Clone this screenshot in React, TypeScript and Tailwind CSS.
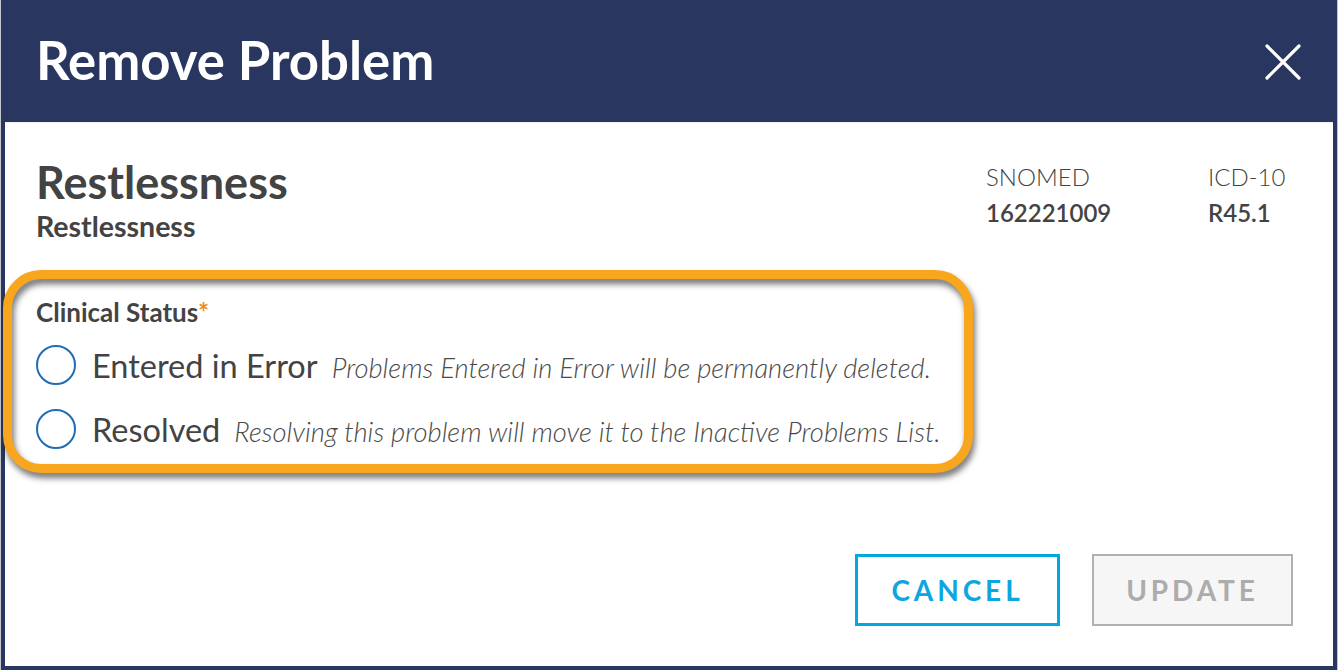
const RadioOption = ({ label, note }: { label: string; note: string }) => {
  return (
    <div className="flex items-center h-[64px]">
      <span className="w-[40px] h-[40px] rounded-full border-2 border-[#1f6db6] bg-white shrink-0" />
      <div className="flex items-baseline ml-[16px]">
        <span className="text-[32.5px] leading-[1.2] text-[#434343]">{label}</span>
        <span className="ml-[14px] text-[27.4px] leading-[1.2] italic font-light text-[#4a4a4a]">{note}</span>
      </div>
    </div>
  );
};

const CloseIcon = () => (
  <svg width="36" height="36" viewBox="0 0 36 36" fill="none">
    <path d="M2 2L34 34M34 2L2 34" stroke="white" strokeWidth="3.2" strokeLinecap="round" />
  </svg>
);

export default function App() {
  return (
    <div
      className="w-[1338px] h-[670px] bg-[#c4c7ce] flex overflow-hidden"
      style={{ fontFamily: "Lato, 'Open Sans', sans-serif" }}
    >
      <div className="ml-px w-[1336px] h-[670px] bg-[#29365f] flex flex-col">
        {/* header */}
        <div className="h-[122px] flex items-center justify-between pl-[35px] pr-[36px] shrink-0">
          <h1 className="text-[52.7px] leading-[1.2] font-bold text-white pb-[2px]">Remove Problem</h1>
          <button className="mt-[2px]">
            <CloseIcon />
          </button>
        </div>

        {/* body */}
        <div className="relative flex-1 mx-[4px] mb-[4px] bg-white border-t border-[#eef0f3] flex flex-col pl-[31px] pr-[25px]">
          <div className="flex justify-between items-start pt-[32px]">
            <div className="flex flex-col">
              <span className="text-[45px] leading-[1.2] font-bold text-[#434343]">Restlessness</span>
              <span className="text-[28.5px] leading-[1.2] font-bold text-[#434343]">Restlessness</span>
            </div>
            <div className="flex mt-[4px] text-[24px] leading-[36px] text-[#434343]">
              <div className="w-[222px] flex flex-col">
                <span className="font-light">SNOMED</span>
                <span className="font-semibold">162221009</span>
              </div>
              <div className="w-[100px] flex flex-col">
                <span className="font-light">ICD-10</span>
                <span className="font-semibold">R45.1</span>
              </div>
            </div>
          </div>

          <div className="mt-[54px] flex flex-col">
            <span className="text-[26px] leading-[1.2] font-bold text-[#434343]">
              Clinical Status<span className="text-[#f08b1d]">*</span>
            </span>
            <div className="mt-[5px] flex flex-col">
              <RadioOption label="Entered in Error" note="Problems Entered in Error will be permanently deleted." />
              <RadioOption label="Resolved" note="Resolving this problem will move it to the Inactive Problems List." />
            </div>
          </div>

          <div className="mt-auto mb-[40px] mr-[15px] flex justify-end gap-[32px]">
            <button className="w-[205px] h-[72px] border-[3px] border-[#00a8e2] bg-white text-[28px] font-bold tracking-[0.14em] text-[#0ea6df] flex items-center justify-center">
              CANCEL
            </button>
            <button className="w-[201px] h-[72px] border-2 border-[#b1b1b1] bg-[#f6f6f6] text-[28px] font-bold tracking-[0.14em] text-[#acacac] flex items-center justify-center">
              UPDATE
            </button>
          </div>

          {/* orange annotation ring */}
          <div className="absolute left-[-2px] top-[147px] w-[970px] h-[203px] rounded-[38px] border-[9px] border-[#f9a61f] [filter:drop-shadow(2px_5px_3px_rgba(0,0,0,0.55))] pointer-events-none" />
        </div>
      </div>
    </div>
  );
}
